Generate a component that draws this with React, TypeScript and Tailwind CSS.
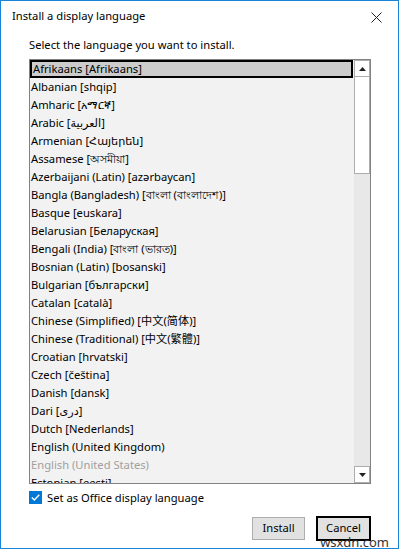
import React from 'react';

const languages = [
  'Afrikaans [Afrikaans]',
  'Albanian [shqip]',
  'Amharic [አማርኛ]',
  'Arabic [العربية]',
  'Armenian [Հայերեն]',
  'Assamese [অসমীয়া]',
  'Azerbaijani (Latin) [azərbaycan]',
  'Bangla (Bangladesh) [বাংলা (বাংলাদেশ)]',
  'Basque [euskara]',
  'Belarusian [Беларуская]',
  'Bengali (India) [বাংলা (ভারত)]',
  'Bosnian (Latin) [bosanski]',
  'Bulgarian [български]',
  'Catalan [català]',
  'Chinese (Simplified) [中文(简体)]',
  'Chinese (Traditional) [中文(繁體)]',
  'Croatian [hrvatski]',
  'Czech [čeština]',
  'Danish [dansk]',
  'Dari [دری]',
  'Dutch [Nederlands]',
  'English (United Kingdom)',
  'English (United States)',
  'Estonian [eesti]',
];

const font = { fontFamily: '"Noto Sans", "Noto Sans CJK SC", "DejaVu Sans", sans-serif' };

export default function App() {
  return (
    <div className="w-[400px] h-[550px] bg-white" style={font}>
      <div className="w-[399px] h-[549px] border border-[#1883d7] flex flex-col relative">
        {/* title bar */}
        <div className="flex items-center justify-between h-[31px] pl-[11px] pr-[16px]">
          <span className="text-[11.2px] text-black">Install a display language</span>
          <svg width="11" height="11" viewBox="0 0 11 11" className="mt-[1px]">
            <path d="M0.5 0.5 L10.5 10.5 M10.5 0.5 L0.5 10.5" stroke="#222" strokeWidth="1" />
          </svg>
        </div>

        <div className="flex flex-col pl-[28px] pr-[27px]">
          <div className="text-[11.2px] text-black h-[27px] pt-[5px]">Select the language you want to install.</div>

          {/* list box */}
          <div className="flex h-[425px] border border-[#828282] bg-[#f2f2f2]">
            <div className="flex-1 flex flex-col overflow-hidden">
              {languages.map((lang, i) => (
                <div
                  key={lang}
                  className={
                    i === 0
                      ? 'h-[18px] shrink-0 leading-[14px] text-[11.2px] text-black bg-[#cccccc] border-2 border-black pl-[1px] whitespace-nowrap'
                      : i === 22
                      ? 'h-[18px] shrink-0 leading-[18px] text-[11.2px] text-[#a0a0a0] pl-[1px] whitespace-nowrap'
                      : 'h-[18px] shrink-0 leading-[18px] text-[11.2px] text-black pl-[1px] whitespace-nowrap'
                  }
                >
                  {lang}
                </div>
              ))}
            </div>

            {/* scrollbar */}
            <div className="w-[17px] flex flex-col bg-[#e8e8e8] border-l border-[#f2f2f2]">
              <div className="h-[17px] border border-[#adadad] bg-white flex items-center justify-center">
                <svg width="7" height="4" viewBox="0 0 7 4">
                  <path d="M0 4 L3.5 0 L7 4 Z" fill="#222" />
                </svg>
              </div>
              <div className="h-[97px] border border-t-0 border-[#adadad] bg-white" />
              <div className="flex-1" />
              <div className="h-[17px] border border-[#adadad] bg-white flex items-center justify-center">
                <svg width="7" height="4" viewBox="0 0 7 4">
                  <path d="M0 0 L7 0 L3.5 4 Z" fill="#222" />
                </svg>
              </div>
            </div>
          </div>

          {/* checkbox */}
          <div className="flex items-center gap-[5px] mt-[7px] h-[13px]">
            <div className="w-[13px] h-[13px] bg-[#0078d7] flex items-center justify-center">
              <svg width="9" height="7" viewBox="0 0 9 7">
                <path d="M0.8 3.6 L3.3 6 L8.3 0.8" stroke="white" strokeWidth="1.4" fill="none" />
              </svg>
            </div>
            <span className="text-[11.2px] leading-[13px] text-black">Set as Office display language</span>
          </div>

          {/* buttons */}
          <div className="flex justify-end items-center gap-[11px] mt-[12px]">
            <button className="w-[53px] h-[23px] bg-[#e1e1e1] border border-[#adadad] text-[11.2px] text-black">
              Install
            </button>
            <button className="w-[55px] h-[25px] bg-[#e1e1e1] border-2 border-black text-[11.2px] text-black">
              Cancel
            </button>
          </div>
        </div>

        <span className="absolute right-[9px] bottom-[0px] text-[13px] leading-[12px] text-[#333]">wsxdn.com</span>
      </div>
    </div>
  );
}
